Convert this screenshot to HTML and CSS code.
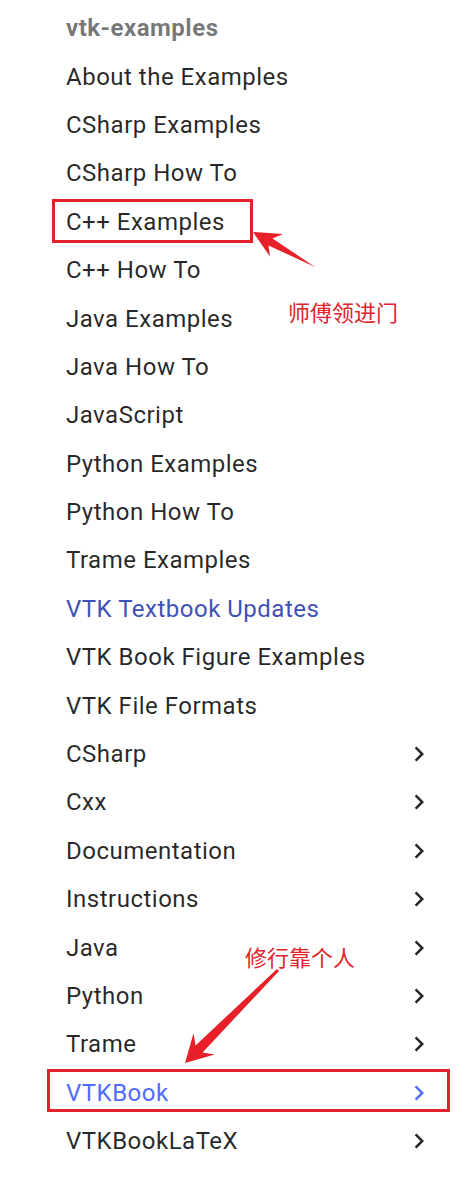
FILE: index.html
```html
<!DOCTYPE html>
<html lang="zh-CN">

<head>
    <meta charset="UTF-8">
    <meta name="viewport" content="width=device-width, initial-scale=1.0">
    <title>vtk-examples</title>
    <link rel="stylesheet" href="styles.css">
</head>

<body>
    <!-- 导航 -->
    <nav class="nav">
        <div class="nav-title">vtk-examples</div>
        <ul class="nav-list">
            <li><a href="#">About the Examples</a></li>
            <li><a href="#">CSharp Examples</a></li>
            <li><a href="#">CSharp How To</a></li>
            <li><a href="#">C++ Examples</a></li>
            <li><a href="#">C++ How To</a></li>
            <li><a href="#">Java Examples</a></li>
            <li><a href="#">Java How To</a></li>
            <li><a href="#">JavaScript</a></li>
            <li><a href="#">Python Examples</a></li>
            <li><a href="#">Python How To</a></li>
            <li><a href="#">Trame Examples</a></li>
            <li><a href="#" class="active">VTK Textbook Updates</a></li>
            <li><a href="#">VTK Book Figure Examples</a></li>
            <li><a href="#">VTK File Formats</a></li>
            <li><a href="#">CSharp <svg class="chev" viewBox="0 0 24 24"><path d="M8.59 16.59 13.17 12 8.59 7.41 10 6l6 6-6 6z"/></svg></a></li>
            <li><a href="#">Cxx <svg class="chev" viewBox="0 0 24 24"><path d="M8.59 16.59 13.17 12 8.59 7.41 10 6l6 6-6 6z"/></svg></a></li>
            <li><a href="#">Documentation <svg class="chev" viewBox="0 0 24 24"><path d="M8.59 16.59 13.17 12 8.59 7.41 10 6l6 6-6 6z"/></svg></a></li>
            <li><a href="#">Instructions <svg class="chev" viewBox="0 0 24 24"><path d="M8.59 16.59 13.17 12 8.59 7.41 10 6l6 6-6 6z"/></svg></a></li>
            <li><a href="#">Java <svg class="chev" viewBox="0 0 24 24"><path d="M8.59 16.59 13.17 12 8.59 7.41 10 6l6 6-6 6z"/></svg></a></li>
            <li><a href="#">Python <svg class="chev" viewBox="0 0 24 24"><path d="M8.59 16.59 13.17 12 8.59 7.41 10 6l6 6-6 6z"/></svg></a></li>
            <li><a href="#">Trame <svg class="chev" viewBox="0 0 24 24"><path d="M8.59 16.59 13.17 12 8.59 7.41 10 6l6 6-6 6z"/></svg></a></li>
            <li><a href="#" class="hover">VTKBook <svg class="chev" viewBox="0 0 24 24"><path d="M8.59 16.59 13.17 12 8.59 7.41 10 6l6 6-6 6z"/></svg></a></li>
            <li><a href="#">VTKBookLaTeX <svg class="chev" viewBox="0 0 24 24"><path d="M8.59 16.59 13.17 12 8.59 7.41 10 6l6 6-6 6z"/></svg></a></li>
        </ul>
    </nav>

    <!-- 标注 -->
    <div class="mark mark-cpp"></div>
    <div class="mark mark-book"></div>
    <div class="note note-1">师傅领进门</div>
    <div class="note note-2">修行靠个人</div>
    <svg class="arrows" viewBox="0 0 469 1177">
        <polygon points="253,232 283,234 272.5,238.4 315,267 268.5,245.4 270,256.6" />
        <polygon points="185,1063 193.5,1033.3 195.6,1045.4 277,969 279,971 202.6,1052.4 214.7,1054.5" />
    </svg>
</body>

</html>
```

FILE: styles.css
```css
* {
    margin: 0;
    padding: 0;
}

li {
    list-style: none;
}

a {
    text-decoration: none;
}

body {
    position: relative;
    width: 469px;
    height: 1177px;
    background: #fff;
    font-family: Roboto, "Noto Sans", sans-serif;
    overflow: hidden;
}

.nav {
    padding-top: 4px;
}

.nav-title,
.nav-list a {
    display: flex;
    align-items: center;
    justify-content: space-between;
    height: 48.4px;
    padding: 0 35px 0 66px;
    font-size: 24px;
    letter-spacing: .5px;
}

.nav-title {
    font-weight: 700;
    color: rgba(0, 0, 0, .54);
}

.nav-list a {
    color: rgba(0, 0, 0, .85);
}

.nav-list a.active {
    color: #4051b5;
}

.nav-list a.hover {
    color: #526cfe;
}

.chev {
    width: 30px;
    height: 30px;
    fill: currentColor;
}

/* 红框 */
.mark {
    position: absolute;
    border: 3px solid #e1222b;
}

.mark-cpp {
    left: 52px;
    top: 199px;
    width: 195px;
    height: 38px;
}

.mark-book {
    left: 47px;
    top: 1069px;
    width: 397px;
    height: 37px;
}

.note {
    position: absolute;
    font-family: "Noto Sans CJK SC", sans-serif;
    font-size: 22px;
    line-height: 24px;
    color: #e1222b;
}

.note-1 {
    left: 288px;
    top: 299px;
}

.note-2 {
    left: 245px;
    top: 944px;
}

.arrows {
    position: absolute;
    left: 0;
    top: 0;
    width: 469px;
    height: 1177px;
    fill: #e8202a;
}
```
